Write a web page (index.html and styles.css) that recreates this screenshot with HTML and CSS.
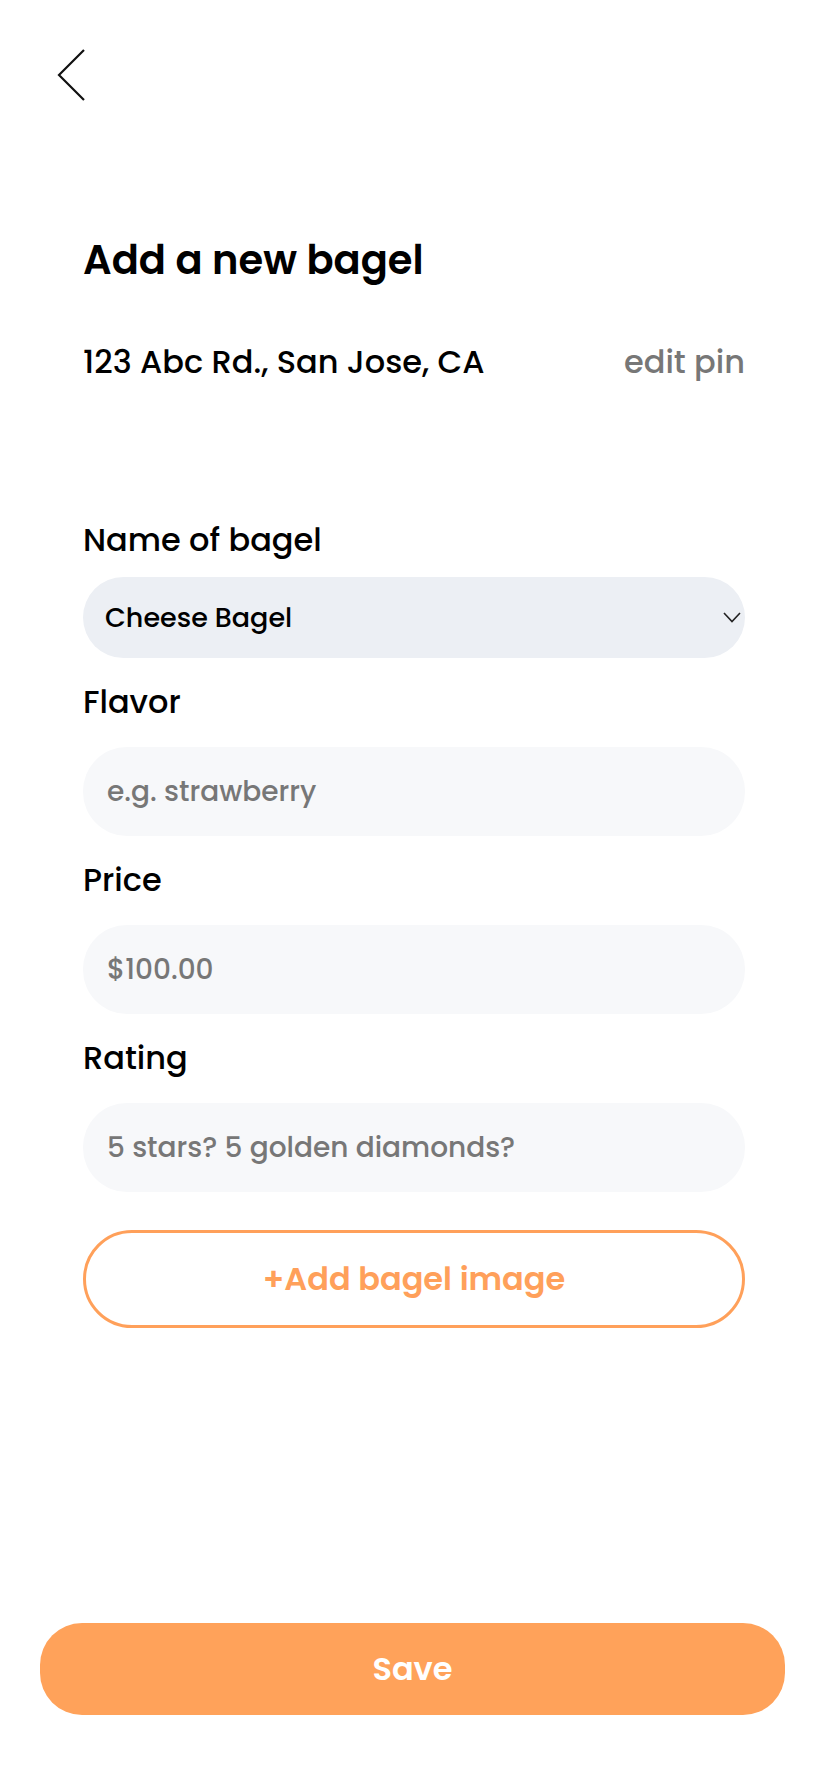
FILE: index.html
```html
<!DOCTYPE html>
<html lang="en">
<head>
<meta charset="utf-8">
<title>Add a new bagel</title>
<link rel="stylesheet" href="styles.css">
</head>
<body>
<div class="screen">
  <header class="topbar">
    <button class="back" aria-label="Back">
      <svg width="30" height="52" viewBox="0 0 30 52"><path d="M27 1 L2 26 L27 51" fill="none" stroke="#111" stroke-width="2.2"/></svg>
    </button>
  </header>
  <main class="content">
    <h1 class="title">Add a new bagel</h1>
    <div class="address-row">
      <span class="address">123 Abc Rd., San Jose, CA</span>
      <a class="edit-pin">edit pin</a>
    </div>
    <form class="form">
      <div class="field field-select">
        <label class="label">Name of bagel</label>
        <div class="select">
          <span class="select-value">Cheese Bagel</span>
          <svg class="caret" width="18" height="11" viewBox="0 0 18 11"><path d="M1 1 L9 9.5 L17 1" fill="none" stroke="#222" stroke-width="1.6"/></svg>
        </div>
      </div>
      <div class="field">
        <label class="label">Flavor</label>
        <input class="input" placeholder="e.g. strawberry">
      </div>
      <div class="field">
        <label class="label">Price</label>
        <input class="input" placeholder="$100.00">
      </div>
      <div class="field">
        <label class="label">Rating</label>
        <input class="input" placeholder="5 stars? 5 golden diamonds?">
      </div>
      <button type="button" class="add-image">+Add bagel image</button>
    </form>
  </main>
  <footer class="footer">
    <button class="save">Save</button>
  </footer>
</div>
</body>
</html>
```
FILE: styles.css
```css
* { box-sizing: border-box; }
html, body { margin: 0; padding: 0; background: #fff; }
body { font-family: "Poppins", "Inter", "Noto Sans", sans-serif; color: #000; }
.screen { min-height: 1792px; display: flex; flex-direction: column; }
.topbar { padding: 49px 0 0 57px; height: 110px; }
.back { border: 0; background: none; padding: 0; display: block; cursor: pointer; }
.back svg { display: block; }
.content { padding: 0 83px; }
.title { margin: 126px 0 0; font-size: 40px; line-height: 48px; font-weight: 600; }
.address-row { display: flex; justify-content: space-between; align-items: center; margin-top: 58px; }
.address { font-size: 32px; line-height: 40px; font-weight: 500; }
.edit-pin { font-size: 32px; line-height: 40px; font-weight: 500; color: #777; }
.form { margin-top: 134px; display: flex; flex-direction: column; }
.field { display: flex; flex-direction: column; }
.field + .field { margin-top: 20px; }
.label { font-size: 32px; line-height: 48px; font-weight: 500; margin-bottom: 21px; }
.field-select .label { margin-bottom: 13px; }
.select { height: 81px; border-radius: 41px; background: #ECEFF4; display: flex; align-items: center; justify-content: space-between; padding: 0 4px 0 22px; }
.select-value { font-size: 27px; font-weight: 500; }
.caret { display: block; }
.input { height: 89px; border: 0; border-radius: 44px; background: #F7F8FA; padding: 0 24px; font-family: inherit; font-size: 28px; font-weight: 500; color: #000; outline: none; width: 100%; }
.input::placeholder { color: #777; }
.add-image { margin-top: 38px; height: 98px; border: 3px solid #FFA05A; border-radius: 49px; background: #fff; color: #FFA05A; font-family: inherit; font-size: 32px; font-weight: 600; cursor: pointer; }
.footer { margin-top: auto; padding: 0 43px 77px 40px; }
.save { width: 100%; height: 92px; border: 0; border-radius: 42px; background: #FFA25A; color: #fff; font-family: inherit; font-size: 32px; font-weight: 600; cursor: pointer; }
```
